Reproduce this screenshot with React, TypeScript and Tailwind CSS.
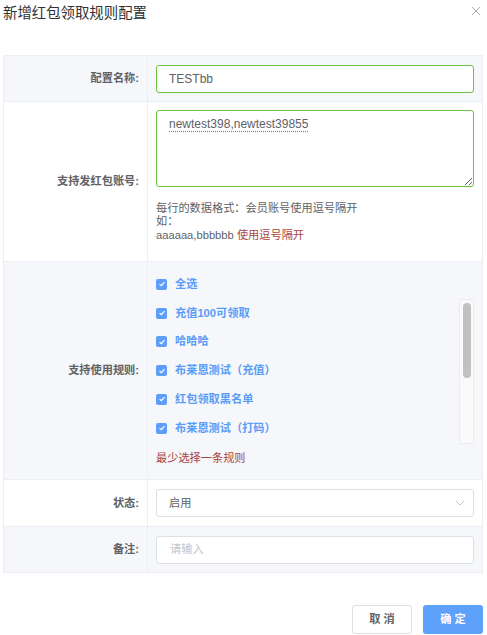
import React from "react";

const FONT = '"Liberation Sans", "Noto Sans CJK SC", sans-serif';

const rules = [
  "充值100可领取",
  "哈哈哈",
  "布莱恩测试（充值）",
  "红包领取黑名单",
  "布莱恩测试（打码）",
];

function Check() {
  return (
    <span className="w-[11px] h-[11px] rounded-[2px] bg-[#5c9ef8] flex items-center justify-center shrink-0">
      <svg width="8" height="8" viewBox="0 0 8 8">
        <path d="M1.6 4.1 L3.3 5.7 L6.5 2.2" stroke="#fff" strokeWidth="1.2" fill="none" />
      </svg>
    </span>
  );
}

function CheckItem({ label }: { label: string }) {
  return (
    <div className="h-[28.75px] flex items-center gap-[8px] shrink-0">
      <Check />
      <span className="text-[11.2px] font-semibold text-[#5a9cf8] leading-none">{label}</span>
    </div>
  );
}

function Label({ text }: { text: string }) {
  return (
    <div className="w-[144px] shrink-0 border-r border-[#ebeef5] flex items-center justify-end pr-[8px] text-[11.2px] font-bold text-[#606266]">
      {text}
    </div>
  );
}

export default function App() {
  return (
    <div className="w-[487px] h-[635px] bg-white text-[#606266]" style={{ fontFamily: FONT }}>
      <div className="h-[55px] flex justify-between items-start pl-[3px] pr-[6px] pt-[4px]">
        <div className="text-[14.4px] text-[#303133] leading-[18px]">新增红包领取规则配置</div>
        <svg width="10" height="10" viewBox="0 0 10 10" className="mt-[2px]">
          <path d="M1 1 L9 9 M9 1 L1 9" stroke="#a8abb2" strokeWidth="1" />
        </svg>
      </div>

      <div className="mx-[3px] w-[480px] border-t border-l border-[#ebeef5]">
        {/* Row 1 */}
        <div className="flex h-[46px] bg-[#f5f7fa] border-b border-r border-[#ebeef5]">
          <Label text="配置名称:" />
          <div className="flex-1 flex items-center pl-[8px] pr-[8px]">
            <div className="w-full h-[28px] border border-[#6cc03f] rounded-[3px] bg-white flex items-center pl-[12px] text-[12px] text-[#606266]">
              TESTbb
            </div>
          </div>
        </div>

        {/* Row 2 */}
        <div className="flex h-[160px] bg-white border-b border-r border-[#ebeef5]">
          <Label text="支持发红包账号:" />
          <div className="flex-1 pl-[8px] pr-[8px] pt-[8px]">
            <textarea
              readOnly
              spellCheck={false}
              defaultValue="newtest398,newtest39855"
              className="block w-full h-[77px] border border-[#6cc03f] rounded-[3px] bg-white pl-[12px] pt-[5px] text-[12px] leading-[16px] text-[#606266] outline-none underline decoration-dotted decoration-[#e05a5a] underline-offset-[3px]"
              style={{ fontFamily: FONT }}
            />
            <div className="mt-[15px] text-[11.2px] leading-[13.3px] text-[#606266]">
              <div>每行的数据格式：会员账号使用逗号隔开</div>
              <div>如：</div>
              <div>
                aaaaaa,bbbbbb <span className="text-[#a94442]">使用逗号隔开</span>
              </div>
            </div>
          </div>
        </div>

        {/* Row 3 */}
        <div className="flex h-[218px] bg-[#f5f7fa] border-b border-r border-[#ebeef5]">
          <Label text="支持使用规则:" />
          <div className="flex-1 pl-[8px] pr-[8px] pt-[8px] flex flex-col">
            <CheckItem label="全选" />
            <div className="h-[145px] flex">
              <div className="flex-1 overflow-hidden flex flex-col">
                {rules.map((r) => (
                  <CheckItem key={r} label={r} />
                ))}
              </div>
              <div className="w-[15px] h-full border border-[#ececec] bg-[#fafafa] pt-[3px] pl-[3px]">
                <div className="w-[8px] h-[75px] rounded-full bg-[#c1c1c1]" />
              </div>
            </div>
            <div className="mt-[7px] text-[11.2px] leading-[14px] text-[#a94442]">最少选择一条规则</div>
          </div>
        </div>

        {/* Row 4 */}
        <div className="flex h-[47px] bg-white border-b border-r border-[#ebeef5]">
          <Label text="状态:" />
          <div className="flex-1 flex items-center pl-[8px] pr-[8px]">
            <div className="w-full h-[28px] border border-[#dcdfe6] rounded-[3px] bg-white flex items-center justify-between pl-[12px] pr-[8px] text-[11.2px] text-[#606266]">
              <span>启用</span>
              <svg width="10" height="6" viewBox="0 0 10 6">
                <path d="M1 1 L5 5 L9 1" stroke="#c0c4cc" strokeWidth="1" fill="none" />
              </svg>
            </div>
          </div>
        </div>

        {/* Row 5 */}
        <div className="flex h-[46px] bg-[#f5f7fa] border-b border-r border-[#ebeef5]">
          <Label text="备注:" />
          <div className="flex-1 flex items-center pl-[8px] pr-[8px]">
            <div className="w-full h-[28px] border border-[#dcdfe6] rounded-[3px] bg-white flex items-center pl-[13px] text-[11.2px] text-[#c0c4cc]">
              请输入
            </div>
          </div>
        </div>
      </div>

      <div className="flex justify-end gap-[11px] pr-[4px] mt-[32px]">
        <button className="w-[60px] h-[29px] border border-[#dcdfe6] rounded-[3px] bg-white text-[11.2px] font-bold text-[#606266]">
          取 消
        </button>
        <button className="w-[60px] h-[29px] rounded-[3px] bg-[#5ea1fb] text-[11.2px] font-bold text-white">
          确 定
        </button>
      </div>
    </div>
  );
}
